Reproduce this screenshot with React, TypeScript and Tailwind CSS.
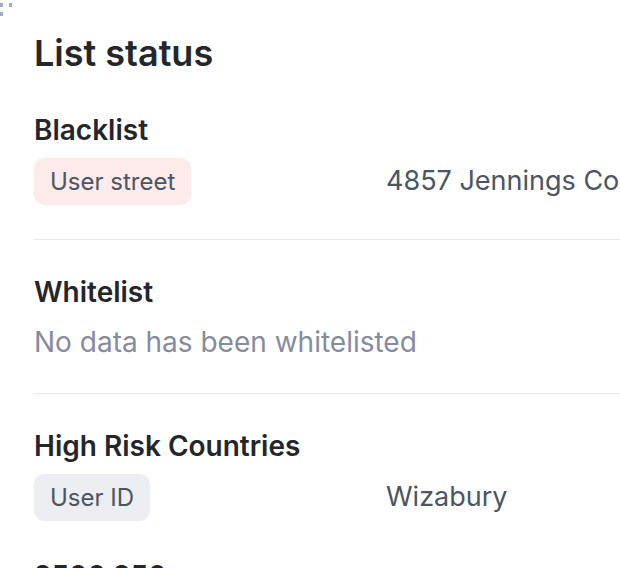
const font = { fontFamily: 'Inter, "Noto Sans", sans-serif' }

const Badge = ({ label, tone }: { label: string; tone: 'red' | 'gray' }) => (
  <span
    className={`inline-flex items-center h-[47px] px-4 rounded-[10px] text-[24px] text-[#4b5563] ${
      tone === 'red' ? 'bg-[#fdeaea]' : 'bg-[#edeef2]'
    }`}
  >
    {label}
  </span>
)

const Row = ({ label, tone, value }: { label: string; tone: 'red' | 'gray'; value: string }) => (
  <div className="flex items-center mt-[11px]">
    <div className="w-[352px] shrink-0">
      <Badge label={label} tone={tone} />
    </div>
    <span className="text-[27px] text-[#4b5563] whitespace-nowrap">{value}</span>
  </div>
)

export default function App() {
  return (
    <div className="relative w-[620px] h-[568px] overflow-hidden bg-white" style={font}>
      <div className="absolute left-0 top-[3px] grid grid-cols-2 gap-x-[5px] gap-y-[5px] w-[12px]">
        <span className="w-[3px] h-[4px] bg-[#a3abc0]" />
        <span className="w-[3px] h-[4px] bg-[#a3abc0]" />
        <span className="w-[3px] h-[4px] bg-[#a3abc0]" />
      </div>

      <div className="pl-[34px] pt-[31px] w-[900px]">
        <h1 className="text-[36px] font-semibold text-[#25262b] leading-[44px]">List status</h1>

        <section className="mt-[38px] pb-[34px] border-b border-[#e8e9ed]">
          <h2 className="text-[28px] font-semibold text-[#25262b] leading-[34px]">Blacklist</h2>
          <Row label="User street" tone="red" value="4857 Jennings Court" />
        </section>

        <section className="pt-[35px] pb-[34px] border-b border-[#e8e9ed]">
          <h2 className="text-[28px] font-semibold text-[#25262b] leading-[34px]">Whitelist</h2>
          <p className="text-[28px] text-[#858c9e] leading-[34px] mt-[16px]">No data has been whitelisted</p>
        </section>

        <section className="pt-[35px]">
          <h2 className="text-[28px] font-semibold text-[#25262b] leading-[34px]">High Risk Countries</h2>
          <Row label="User ID" tone="gray" value="Wizabury" />
          <h2 className="mt-[38px] text-[28px] font-semibold text-[#25262b] leading-[34px]">2500 250</h2>
        </section>
      </div>
    </div>
  )
}
